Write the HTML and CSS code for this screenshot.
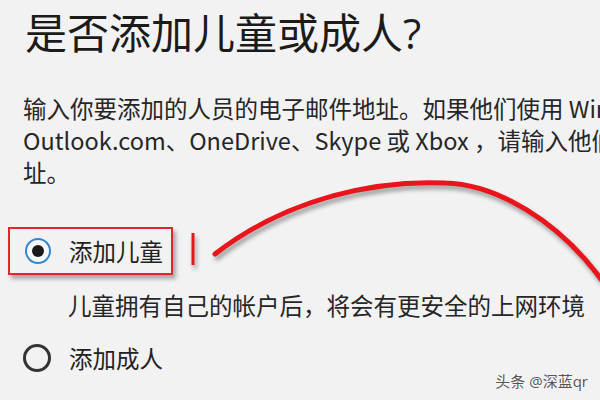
FILE: index.html
```html
<!DOCTYPE html>
<html lang="zh-CN">
<head>
    <meta charset="UTF-8">
    <meta name="viewport" content="width=device-width, initial-scale=1.0">
    <title>是否添加儿童或成人?</title>
    <link rel="stylesheet" href="styles.css">
</head>
<body>
    <div class="page">
        <h1 class="title">是否添加儿童或成人?</h1>

        <p class="intro">
            输入你要添加的人员的电子邮件地址。如果他们使用 Windows、<br>
            Outlook.com、OneDrive、Skype 或 Xbox ，请输入他们用于登录的电子邮件地<br>
            址。
        </p>

        <div class="options">
            <label class="option option-marked">
                <span class="radio radio-checked"><span class="radio-dot"></span></span>
                <span class="option-label">添加儿童</span>
            </label>
            <div class="option-desc">儿童拥有自己的帐户后，将会有更安全的上网环境</div>
            <label class="option option-plain">
                <span class="radio"></span>
                <span class="option-label">添加成人</span>
            </label>
        </div>

        <!-- red hand-drawn annotation -->
        <svg class="marker" width="600" height="400" viewBox="0 0 600 400">
            <line x1="193" y1="233" x2="193" y2="265" stroke="#e8151c" stroke-width="3" />
            <path d="M215 254 C 290 196, 380 180, 445 183 C 490 184, 560 215, 612 295"
                  fill="none" stroke="#e8151c" stroke-width="5" stroke-linecap="round" />
        </svg>

        <div class="watermark">头条 @深蓝qr</div>
    </div>
</body>
</html>
```

FILE: styles.css
```css
html, body {
    margin: 0;
    padding: 0;
}

body {
    background: #f2f2f2;
    color: #222;
    font-family: "Open Sans", "Noto Sans CJK SC", sans-serif;
    overflow: hidden;
}

.page {
    position: relative;
    width: 600px;
    height: 400px;
    padding: 8px 0 0 25px;
    box-sizing: border-box;
    overflow: hidden;
}

.title {
    margin: 0;
    font-size: 42px;
    line-height: 50px;
    font-weight: normal;
    color: #1b1b1b;
    white-space: nowrap;
}

.intro {
    margin: 34px 0 0 -2px;
    font-family: "Noto Sans CJK SC", sans-serif;
    font-size: 23.5px;
    line-height: 32px;
    white-space: nowrap;
    color: #262626;
}

.options {
    margin-top: 39px;
    margin-left: -17px;
    display: flex;
    flex-direction: column;
    align-items: flex-start;
}

.option {
    display: flex;
    align-items: center;
    gap: 18px;
    font-size: 23.5px;
}

.option-marked {
    height: 44px;
    padding: 0 8px 0 15px;
    border: 2px solid #e2262d;
    box-shadow: 3px 4px 4px rgba(0, 0, 0, 0.3);
}

.option-plain {
    height: 32px;
    margin-top: 20px;
    padding-left: 15px;
}

.radio {
    width: 28px;
    height: 28px;
    box-sizing: border-box;
    border: 3px solid #333;
    border-radius: 50%;
    display: flex;
    align-items: center;
    justify-content: center;
}

.radio-checked {
    width: 26px;
    height: 26px;
    border: 2.5px solid #2d86d4;
    background: #f8f8f8;
}

.radio-dot {
    width: 12px;
    height: 12px;
    border-radius: 50%;
    background: #1a1a1a;
}

.option-label {
    color: #222;
}

.option-desc {
    margin: 15px 0 0 60px;
    font-size: 23.5px;
    line-height: 32px;
    white-space: nowrap;
    color: #262626;
}

.marker {
    position: absolute;
    left: 0;
    top: 0;
    pointer-events: none;
    filter: drop-shadow(2px 4px 2px rgba(0, 0, 0, 0.35));
}

.watermark {
    position: absolute;
    right: 12px;
    bottom: 9px;
    font-size: 15px;
    color: #555;
    text-shadow: 0 0 2px #fff;
}
```
